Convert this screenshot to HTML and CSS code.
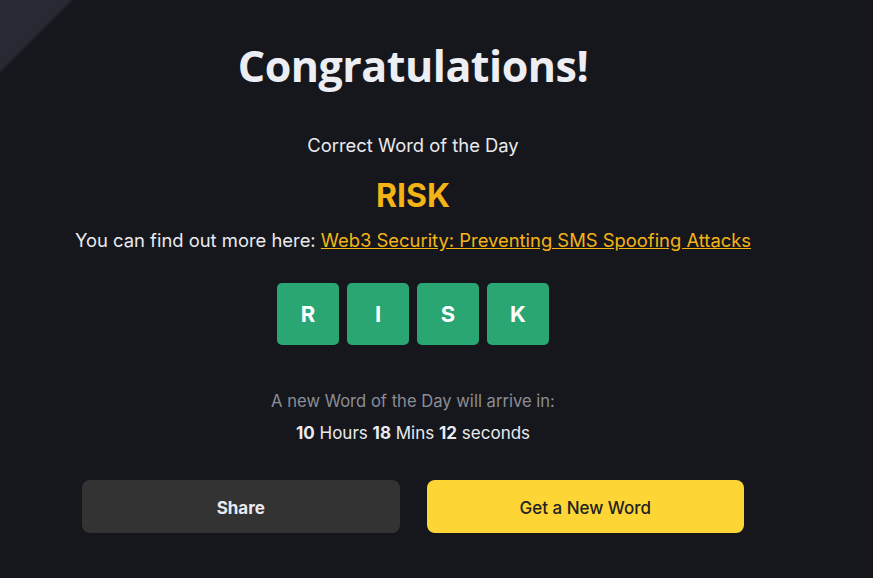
FILE: index.html
```html
<!DOCTYPE html>
<html lang="en">
<head>
    <meta charset="UTF-8" />
    <meta name="viewport" content="width=device-width, initial-scale=1" />
    <title>Word of the Day</title>
    <link rel="stylesheet" href="styles.css">
</head>
<body>
    <div class="result">
        <h1 class="result-title">Congratulations!</h1>

        <p class="result-label">Correct Word of the Day</p>
        <p class="result-word">RISK</p>
        <p class="result-more">You can find out more here: <a href="#">Web3 Security: Preventing SMS Spoofing Attacks</a></p>

        <div class="tiles">
            <span class="tile">R</span>
            <span class="tile">I</span>
            <span class="tile">S</span>
            <span class="tile">K</span>
        </div>

        <p class="next-label">A new Word of the Day will arrive in:</p>
        <p class="countdown"><b>10</b> Hours <b>18</b> Mins <b>12</b> seconds</p>

        <div class="actions">
            <button class="btn btn-share">Share</button>
            <button class="btn btn-new">Get a New Word</button>
        </div>
    </div>
</body>
</html>
```

FILE: styles.css
```css
html, body {
    height: 100%;
}
body {
    margin: 0;
    font-family: 'Inter', sans-serif;
    color: #e9eaef;
    background: linear-gradient(135deg, #272a33 0, #272a33 49px, #16171c 53px, #16171c 100%);
}
.result {
    width: 662px;
    margin-left: 82px;
    display: flex;
    flex-direction: column;
    align-items: center;
    text-align: center;
}
.result p {
    margin: 0;
    white-space: nowrap;
}
.result-title {
    font-family: 'Open Sans', sans-serif;
    font-weight: 700;
    font-size: 43px;
    color: #eceef3;
    margin: 36px 0 0;
    line-height: 60px;
    letter-spacing: -0.5px;
}
.result-label {
    font-size: 18.4px;
    margin-top: 37px !important;
    line-height: 24px;
}
.result-word {
    font-size: 32px;
    font-weight: 700;
    color: #f4b416;
    margin-top: 21px !important;
    line-height: 36px;
}
.result-more {
    font-size: 18.4px;
    margin-top: 14px !important;
    line-height: 24px;
}
.result-more a {
    color: #f4b416;
}
.tiles {
    display: flex;
    gap: 8px;
    margin-top: 31px;
}
.tile {
    width: 62px;
    height: 62px;
    border-radius: 5px;
    background: #29a672;
    color: #fff;
    font-weight: 700;
    font-size: 22px;
    display: flex;
    align-items: center;
    justify-content: center;
}
.next-label {
    font-size: 16.6px;
    color: #8b8d96;
    margin-top: 45px !important;
    line-height: 22px;
}
.countdown {
    font-size: 17px;
    margin-top: 10px !important;
    line-height: 22px;
}
.countdown b {
    font-weight: 700;
}
.actions {
    display: flex;
    gap: 27px;
    width: 100%;
    margin-top: 36px;
}
.btn {
    flex: 1;
    height: 53px;
    padding-top: 4px;
    border: none;
    border-radius: 8px;
    font-family: 'Inter', sans-serif;
    font-size: 17px;
    cursor: pointer;
}
.btn-share {
    background: #333333;
    color: #e9eaef;
    font-weight: 700;
}
.btn-new {
    background: #fdd535;
    color: #222;
    font-weight: 500;
}
```
